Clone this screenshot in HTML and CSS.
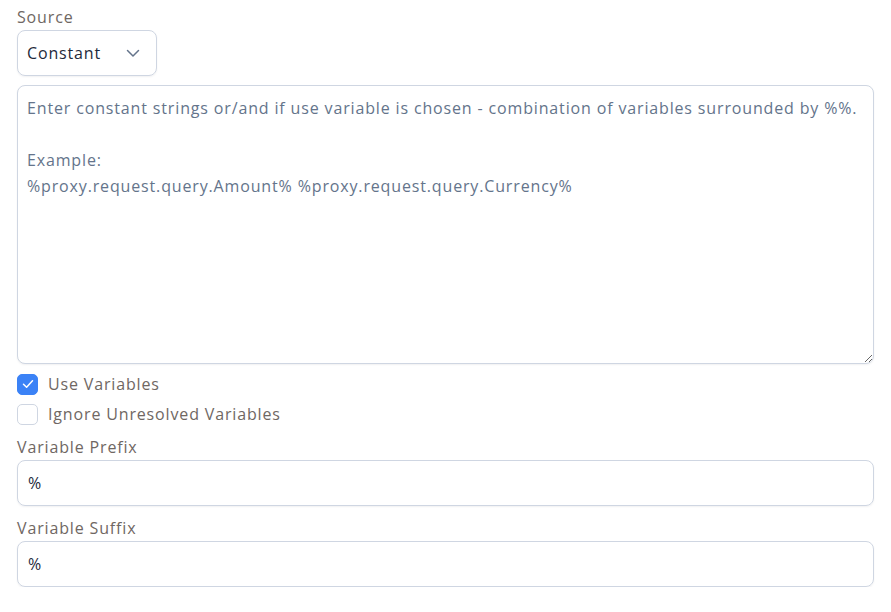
FILE: index.html
```html
<!DOCTYPE html>
<html>
<head>
<meta charset="utf-8">
<link rel="stylesheet" href="styles.css">
</head>
<body>
<div class="form">
  <div class="field">
    <label class="label">Source</label>
    <div class="select">
      <span class="select-value">Constant</span>
      <svg class="chevron" width="16" height="16" viewBox="0 0 16 16"><path d="M2.5 5.5 L8 11 L13.5 5.5" fill="none" stroke="#64748b" stroke-width="1.5" stroke-linecap="round" stroke-linejoin="round"/></svg>
    </div>
  </div>
  <textarea class="textarea" placeholder="Enter constant strings or/and if use variable is chosen - combination of variables surrounded by %%.&#10;&#10;Example:&#10;%proxy.request.query.Amount% %proxy.request.query.Currency%"></textarea>
  <div class="checks">
    <label class="check">
      <span class="box checked"><svg width="14" height="14" viewBox="0 0 14 14"><path d="M2.5 7.3 L5.6 10.2 L11.5 3.8" fill="none" stroke="#fff" stroke-width="1.5" stroke-linecap="round" stroke-linejoin="round"/></svg></span>
      <span class="check-text">Use Variables</span>
    </label>
    <label class="check">
      <span class="box"></span>
      <span class="check-text">Ignore Unresolved Variables</span>
    </label>
  </div>
  <div class="field">
    <label class="label">Variable Prefix</label>
    <div class="input">%</div>
  </div>
  <div class="field">
    <label class="label">Variable Suffix</label>
    <div class="input">%</div>
  </div>
</div>
</body>
</html>
```
FILE: styles.css
```css
* { box-sizing: border-box; }
html, body { margin: 0; padding: 0; background: #fff; }
body {
  font-family: "Open Sans", "Liberation Sans", sans-serif;
  font-size: 16px;
  letter-spacing: 0.85px;
  color: #1e293b;
}
.form {
  padding: 6px 17px 0 17px;
  width: 874px;
  display: flex;
  flex-direction: column;
}
.field { display: flex; flex-direction: column; }
.label {
  color: #6f6763;
  font-size: 16px;
  line-height: 22px;
  margin-bottom: 2px;
}
.select {
  width: 140px;
  height: 46px;
  border: 1px solid #cfd6e2;
  border-radius: 8px;
  display: flex;
  align-items: center;
  justify-content: space-between;
  padding: 0 15px 0 9px;
  box-shadow: 0 1px 2px rgba(15, 23, 42, 0.06);
}
.select-value { color: #1e293b; font-size: 16px; }
.textarea {
  display: block;
  margin-top: 9px;
  width: 857px;
  height: 279px;
  border: 1px solid #cfd6e2;
  border-radius: 8px;
  padding: 9px 9px;
  font-family: inherit;
  font-size: 16px;
  letter-spacing: 0.85px;
  line-height: 26px;
  color: #1e293b;
  resize: vertical;
  box-shadow: 0 1px 2px rgba(15, 23, 42, 0.06);
  outline: none;
}
.textarea::placeholder { color: #64748b; opacity: 1; }
.checks {
  margin-top: 9px;
  display: flex;
  flex-direction: column;
  gap: 8px;
}
.check { display: flex; align-items: center; gap: 10px; height: 22px; }
.box {
  width: 21px;
  height: 21px;
  border-radius: 5px;
  border: 1px solid #cfd6e2;
  background: #fff;
  display: flex;
  align-items: center;
  justify-content: center;
}
.box.checked { background: #3b82f6; border-color: #3b82f6; }
.check-text { color: #6f6763; font-size: 16px; line-height: 22px; }
.checks + .field { margin-top: 11px; }
.field + .field { margin-top: 11px; }
.input {
  width: 857px;
  height: 46px;
  border: 1px solid #cfd6e2;
  border-radius: 8px;
  display: flex;
  align-items: center;
  padding: 0 10px;
  color: #1e293b;
  box-shadow: 0 1px 2px rgba(15, 23, 42, 0.06);
}
```
